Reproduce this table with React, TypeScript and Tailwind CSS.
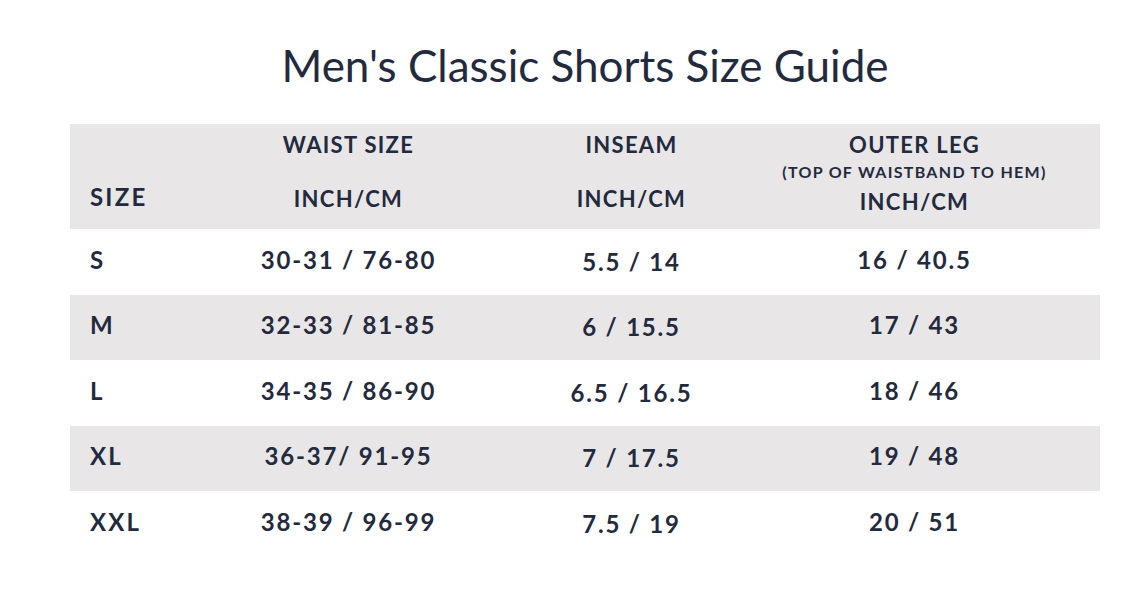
const rows = [
  { size: "S", waist: "30-31 / 76-80", inseam: "5.5 / 14", outer: "16 / 40.5" },
  { size: "M", waist: "32-33 / 81-85", inseam: "6 / 15.5", outer: "17 / 43" },
  { size: "L", waist: "34-35 / 86-90", inseam: "6.5 / 16.5", outer: "18 / 46" },
  { size: "XL", waist: "36-37/ 91-95", inseam: "7 / 17.5", outer: "19 / 48" },
  { size: "XXL", waist: "38-39 / 96-99", inseam: "7.5 / 19", outer: "20 / 51" },
];

const cols = "grid grid-cols-[137px_283px_283px_283px_1fr]";

export default function App() {
  return (
    <div className="min-h-[590px] bg-white font-['Lato',sans-serif] text-[#232a3d]">
      <div className="ml-[70px] w-[1030px] pt-[43px]">
        <h1 className="text-center text-[44px] leading-[44px] font-normal">Men's Classic Shorts Size Guide</h1>

        <div className="mt-[37px]">
          <div className={`${cols} h-[105px] bg-[#e8e6e7] text-[22px] leading-[22px] font-bold tracking-[1.3px]`}>
            <div className="pl-5 pt-[61px] text-[24px] leading-[24px] tracking-[2.2px]">SIZE</div>
            <div className="flex flex-col items-center pt-[10px]">
              <span>WAIST SIZE</span>
              <span className="mt-[32px]">INCH/CM</span>
            </div>
            <div className="flex flex-col items-center pt-[10px]">
              <span>INSEAM</span>
              <span className="mt-[32px]">INCH/CM</span>
            </div>
            <div className="flex flex-col items-center pt-[10px]">
              <span>OUTER LEG</span>
              <span className="mt-[8px] text-[16px] leading-[16px] tracking-[1.3px]">(TOP OF WAISTBAND TO HEM)</span>
              <span className="mt-[11px]">INCH/CM</span>
            </div>
            <div />
          </div>

          {rows.map((r, i) => (
            <div
              key={r.size}
              className={`${cols} h-[65.5px] items-center text-[24px] leading-[24px] font-bold tracking-[1.8px] ${i % 2 === 1 ? "bg-[#e8e6e7]" : "bg-white"}`}
            >
              <div className="pl-5 -mt-[4px] tracking-[2.2px]">{r.size}</div>
              <div className="text-center -mt-[4px]">{r.waist}</div>
              <div className="text-center">{r.inseam}</div>
              <div className="text-center -mt-[4px]">{r.outer}</div>
              <div />
            </div>
          ))}
        </div>
      </div>
    </div>
  );
}
